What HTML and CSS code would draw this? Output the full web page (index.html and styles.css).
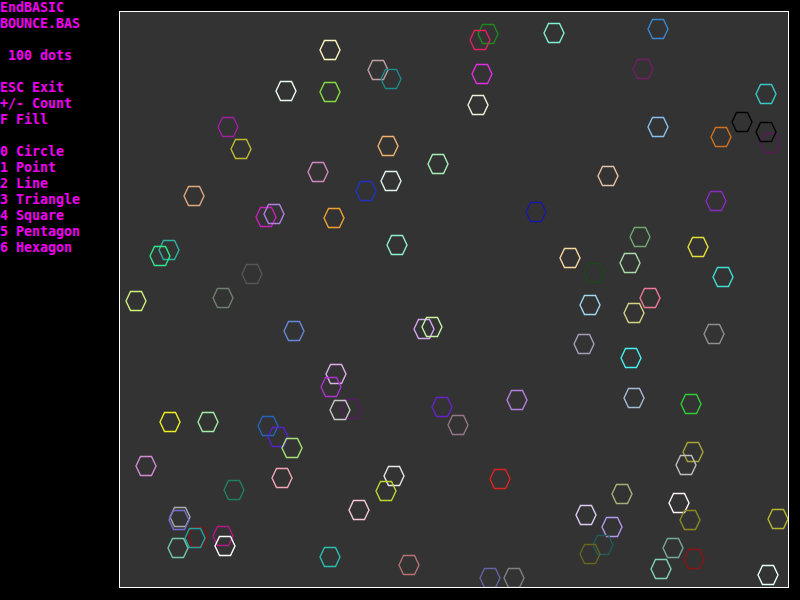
FILE: index.html
```html
<!DOCTYPE html>
<html>
<head>
<meta charset="utf-8">
<link rel="stylesheet" href="styles.css">
<title>EndBASIC BOUNCE.BAS</title>
</head>
<body>
<div class="screen">
<pre class="side">EndBASIC
BOUNCE.BAS

 100 dots

ESC Exit
+/- Count
F Fill

0 Circle
1 Point
2 Line
3 Triangle
4 Square
5 Pentagon
6 Hexagon</pre>
<div class="canvas">
<svg class="dots" width="668" height="575" viewBox="120 12 668 575" xmlns="http://www.w3.org/2000/svg">
<defs><polygon id="h" points="-10,0 -5.5,-9.5 5.5,-9.5 10,0 5.5,9.5 -5.5,9.5" fill="none" stroke-width="1.4"/></defs>
<use href="#h" x="330" y="50" stroke="#fff8c0"/>
<use href="#h" x="286" y="91" stroke="#eefff0"/>
<use href="#h" x="330" y="92" stroke="#80e040"/>
<use href="#h" x="228" y="127" stroke="#a020a0"/>
<use href="#h" x="241" y="149" stroke="#c0b830"/>
<use href="#h" x="318" y="172" stroke="#d088c0"/>
<use href="#h" x="194" y="196" stroke="#e0a880"/>
<use href="#h" x="266" y="217" stroke="#c820b8"/>
<use href="#h" x="274" y="214" stroke="#b080e0"/>
<use href="#h" x="334" y="218" stroke="#f0a030"/>
<use href="#h" x="169" y="250" stroke="#30b0a0"/>
<use href="#h" x="160" y="256" stroke="#30e888"/>
<use href="#h" x="252" y="274" stroke="#555555"/>
<use href="#h" x="223" y="298" stroke="#708070"/>
<use href="#h" x="136" y="301" stroke="#d0f080"/>
<use href="#h" x="488" y="34" stroke="#208820"/>
<use href="#h" x="480" y="40" stroke="#e02060"/>
<use href="#h" x="554" y="33" stroke="#80f0d0"/>
<use href="#h" x="378" y="70" stroke="#c0a0a0"/>
<use href="#h" x="391" y="79" stroke="#208888"/>
<use href="#h" x="482" y="74" stroke="#e030e0"/>
<use href="#h" x="478" y="105" stroke="#f0f0d8"/>
<use href="#h" x="388" y="146" stroke="#f0b070"/>
<use href="#h" x="438" y="164" stroke="#a8f0b8"/>
<use href="#h" x="391" y="181" stroke="#e0f5ee"/>
<use href="#h" x="366" y="191" stroke="#2233c0"/>
<use href="#h" x="536" y="212" stroke="#1a1aa0"/>
<use href="#h" x="397" y="245" stroke="#90f0c8"/>
<use href="#h" x="570" y="258" stroke="#f8d8a0"/>
<use href="#h" x="658" y="29" stroke="#3a86d0"/>
<use href="#h" x="643" y="69" stroke="#702060"/>
<use href="#h" x="766" y="94" stroke="#3cc8c8"/>
<use href="#h" x="658" y="127" stroke="#88c0f0"/>
<use href="#h" x="742" y="122" stroke="#000000"/>
<use href="#h" x="721" y="137" stroke="#d07020"/>
<use href="#h" x="770" y="143" stroke="#5a1a5a"/>
<use href="#h" x="766" y="132" stroke="#000000"/>
<use href="#h" x="608" y="176" stroke="#e6c4a8"/>
<use href="#h" x="716" y="201" stroke="#8a2bc0"/>
<use href="#h" x="640" y="237" stroke="#72a872"/>
<use href="#h" x="698" y="247" stroke="#e6e03a"/>
<use href="#h" x="594" y="273" stroke="#1a4a1a"/>
<use href="#h" x="630" y="263" stroke="#a8dca8"/>
<use href="#h" x="723" y="277" stroke="#40e0d0"/>
<use href="#h" x="590" y="305" stroke="#a0d8f0"/>
<use href="#h" x="650" y="298" stroke="#f07898"/>
<use href="#h" x="634" y="313" stroke="#d6d484"/>
<use href="#h" x="714" y="334" stroke="#909090"/>
<use href="#h" x="584" y="344" stroke="#a6a0b8"/>
<use href="#h" x="631" y="358" stroke="#48f0f0"/>
<use href="#h" x="634" y="398" stroke="#a6bcd6"/>
<use href="#h" x="691" y="404" stroke="#33cc33"/>
<use href="#h" x="693" y="452" stroke="#a6a638"/>
<use href="#h" x="686" y="465" stroke="#c0c0c0"/>
<use href="#h" x="622" y="494" stroke="#a8b07a"/>
<use href="#h" x="679" y="503" stroke="#fff4fb"/>
<use href="#h" x="690" y="520" stroke="#8a8a24"/>
<use href="#h" x="778" y="519" stroke="#b5b531"/>
<use href="#h" x="586" y="515" stroke="#dcccf4"/>
<use href="#h" x="612" y="527" stroke="#b497ee"/>
<use href="#h" x="603" y="545" stroke="#205a5a"/>
<use href="#h" x="590" y="554" stroke="#65651e"/>
<use href="#h" x="673" y="548" stroke="#78a89c"/>
<use href="#h" x="694" y="559" stroke="#8a1414"/>
<use href="#h" x="661" y="569" stroke="#7fd4b8"/>
<use href="#h" x="768" y="575" stroke="#e6fffa"/>
<use href="#h" x="294" y="331" stroke="#6688d8"/>
<use href="#h" x="170" y="422" stroke="#eeee22"/>
<use href="#h" x="208" y="422" stroke="#a0eea0"/>
<use href="#h" x="268" y="426" stroke="#2266bb"/>
<use href="#h" x="278" y="437" stroke="#5522cc"/>
<use href="#h" x="292" y="448" stroke="#a6e27a"/>
<use href="#h" x="146" y="466" stroke="#d58ad5"/>
<use href="#h" x="282" y="478" stroke="#f4a6b6"/>
<use href="#h" x="234" y="490" stroke="#1f7f5f"/>
<use href="#h" x="180" y="517" stroke="#aaaaaa"/>
<use href="#h" x="179" y="520" stroke="#7070d0"/>
<use href="#h" x="198" y="537" stroke="#7a1616"/>
<use href="#h" x="195" y="538" stroke="#22a3a3"/>
<use href="#h" x="223" y="536" stroke="#b3188a"/>
<use href="#h" x="225" y="546" stroke="#ffffff"/>
<use href="#h" x="178" y="548" stroke="#74c8a4"/>
<use href="#h" x="330" y="557" stroke="#28c0b0"/>
<use href="#h" x="336" y="374" stroke="#dfb0e8"/>
<use href="#h" x="331" y="387" stroke="#b02ed2"/>
<use href="#h" x="351" y="409" stroke="#5a1a6a"/>
<use href="#h" x="340" y="410" stroke="#c8c8c8"/>
<use href="#h" x="424" y="329" stroke="#d4a8f0"/>
<use href="#h" x="432" y="327" stroke="#c4f4a4"/>
<use href="#h" x="442" y="407" stroke="#6a22c8"/>
<use href="#h" x="458" y="425" stroke="#957686"/>
<use href="#h" x="517" y="400" stroke="#b37fe0"/>
<use href="#h" x="394" y="476" stroke="#e8e8e8"/>
<use href="#h" x="386" y="491" stroke="#c0d430"/>
<use href="#h" x="500" y="479" stroke="#dd2222"/>
<use href="#h" x="359" y="510" stroke="#f5c8d8"/>
<use href="#h" x="409" y="565" stroke="#b57272"/>
<use href="#h" x="490" y="578" stroke="#6464a4"/>
<use href="#h" x="514" y="578" stroke="#808080"/>
</svg>
</div>
</div>
</body>
</html>
```
FILE: styles.css
```css
html, body {
  margin: 0;
  padding: 0;
  background: #000;
  width: 800px;
  height: 600px;
  overflow: hidden;
}

.screen {
  display: flex;
  align-items: flex-start;
  width: 800px;
  height: 600px;
}

.side {
  margin: 0;
  width: 119px;
  flex: 0 0 119px;
  font-family: "DejaVu Sans Mono", "Liberation Mono", monospace;
  font-weight: bold;
  font-size: 13.3px;
  line-height: 16px;
  color: #f000f0;
  white-space: pre;
}

.canvas {
  margin-top: 11px;
  width: 668px;
  height: 575px;
  border: 1px solid #ffffff;
  background: #333333;
  overflow: hidden;
}

.dots {
  display: block;
}
```
